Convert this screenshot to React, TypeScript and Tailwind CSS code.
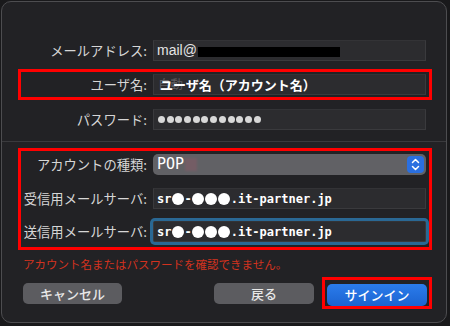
import React from "react";

const jp = { fontFamily: '"Noto Sans CJK JP", "Noto Sans", sans-serif' };
const mono = { fontFamily: '"DejaVu Sans Mono", "Noto Sans CJK JP", monospace' };

function Label({ children }: { children: React.ReactNode }) {
  return (
    <div
      className="w-[126px] shrink-0 text-right text-[13.3px] leading-[21px] text-[#d6d6d6] whitespace-nowrap"
      style={jp}
    >
      {children}
    </div>
  );
}

function Field({ children, focused }: { children?: React.ReactNode; focused?: boolean }) {
  return (
    <div
      className={
        "ml-[6px] w-[273px] h-[21px] shrink-0 bg-[#2c2c2f] border border-[#3a3a3d] border-t-[#333336] flex items-center overflow-hidden relative " +
        (focused ? "shadow-[0_0_0_3px_#2a6894] rounded-[2px]" : "")
      }
    >
      {children}
    </div>
  );
}

function Dot() {
  return <span className="inline-block w-[12px] h-[12px] rounded-full bg-white mx-[0.5px]" />;
}

function ServerText() {
  return (
    <div className="pl-[3px] flex items-center text-[12px] font-bold text-white" style={mono}>
      <span>sr</span>
      <Dot />
      <span>-</span>
      <Dot />
      <Dot />
      <Dot />
      <span>.it-partner.jp</span>
    </div>
  );
}

export default function App() {
  return (
    <div className="w-[450px] h-[326px] bg-[#19191b] overflow-hidden">
      <div className="ml-[1px] mt-[1px] w-[446px] h-[322px] rounded-[10px] border border-[#4d4d50] bg-[#222225] flex flex-col">
        <div className="pt-[38px]" />
        {/* Email */}
        <div className="pl-[19px] flex items-center h-[21px]">
          <Label>メールアドレス:</Label>
          <Field>
            <span
              className="pl-[3px] text-[14px] text-[#e4e4e4]"
              style={{ fontFamily: '"Liberation Sans", Arial, sans-serif' }}
            >
              mail@
            </span>
            <span className="ml-[1px] w-[142px] h-[10px] bg-black mt-[2px]" />
          </Field>
        </div>
        {/* Username box */}
        <div className="mt-[8px] ml-[16px] w-[414px] h-[31px] border-[3px] border-[#ff0000] flex items-center">
          <Label>ユーザ名:</Label>
          <Field>
            <span className="absolute left-[4px] text-[12.5px] text-[#5f5f62]" style={jp}>
              自動
            </span>
            <span className="relative pl-[6px] text-[13px] font-bold text-white whitespace-nowrap" style={jp}>
              ユーザ名（アカウント名）
            </span>
          </Field>
        </div>
        {/* Password */}
        <div className="mt-[9px] pl-[19px] flex items-center h-[21px]">
          <Label>パスワード:</Label>
          <Field>
            <div className="pl-[4px] flex items-center">
              {Array.from({ length: 12 }).map((_, i) => (
                <span key={i} className="inline-block w-[7px] h-[7px] rounded-full bg-[#d8d8d8] mr-[1.7px]" />
              ))}
            </div>
          </Field>
        </div>
        {/* Separator */}
        <div className="mt-[11px] h-[1px] bg-[#3a3a3d]" />
        {/* Account box */}
        <div className="mt-[6px] ml-[16px] w-[414px] border-[3px] border-[#ff0000] pt-[3px] pb-[5px] flex flex-col">
          <div className="flex items-center h-[21px]">
            <Label>アカウントの種類:</Label>
            <div className="ml-[6px] w-[273px] h-[21px] rounded-[5px] bg-[#616165] flex items-center justify-between pr-[2px]">
              <div className="flex items-center pl-[4px]">
                <span className="text-[15px] text-white leading-[21px]" style={mono}>
                  POP
                </span>
                <span className="ml-[1px] w-[12px] h-[13px] bg-[#7d5c66] opacity-70 blur-[1px]" />
              </div>
              <div className="w-[17px] h-[17px] rounded-[4px] bg-[#2a6fe0] flex items-center justify-center">
                <svg width="9" height="13" viewBox="0 0 9 13" fill="none">
                  <path d="M1.5 4.5 L4.5 1.5 L7.5 4.5" stroke="white" strokeWidth="1.5" strokeLinecap="round" strokeLinejoin="round" />
                  <path d="M1.5 8.5 L4.5 11.5 L7.5 8.5" stroke="white" strokeWidth="1.5" strokeLinecap="round" strokeLinejoin="round" />
                </svg>
              </div>
            </div>
          </div>
          <div className="mt-[13px] flex items-center h-[21px]">
            <Label>受信用メールサーバ:</Label>
            <Field>
              <ServerText />
            </Field>
          </div>
          <div className="mt-[12px] flex items-center h-[21px]">
            <Label>送信用メールサーバ:</Label>
            <Field focused>
              <ServerText />
            </Field>
          </div>
        </div>
        {/* Error */}
        <div className="mt-[7px] pl-[21px] text-[11.5px] leading-[14px] text-[#d3321f] whitespace-nowrap" style={jp}>
          アカウント名またはパスワードを確認できません。
        </div>
        {/* Buttons */}
        <div className="mt-[6px] pl-[21px] pr-[14px] flex items-center">
          <button
            className="w-[99px] h-[21px] rounded-[5px] bg-[#5c5c60] text-[13px] font-medium text-[#e8e8e8] leading-[21px]"
            style={jp}
          >
            キャンセル
          </button>
          <div className="flex-1" />
          <button
            className="w-[100px] h-[21px] rounded-[5px] bg-[#5c5c60] text-[13px] font-medium text-[#e8e8e8] leading-[21px]"
            style={jp}
          >
            戻る
          </button>
          <div className="ml-[8px] w-[110px] h-[32px] border-[3px] border-[#ff0000] p-[2px]">
            <button
              className="w-full h-full rounded-[5px] bg-gradient-to-b from-[#2b7cec] to-[#1b63d0] text-[13px] font-medium text-white leading-[22px]"
              style={jp}
            >
              サインイン
            </button>
          </div>
        </div>
      </div>
    </div>
  );
}
